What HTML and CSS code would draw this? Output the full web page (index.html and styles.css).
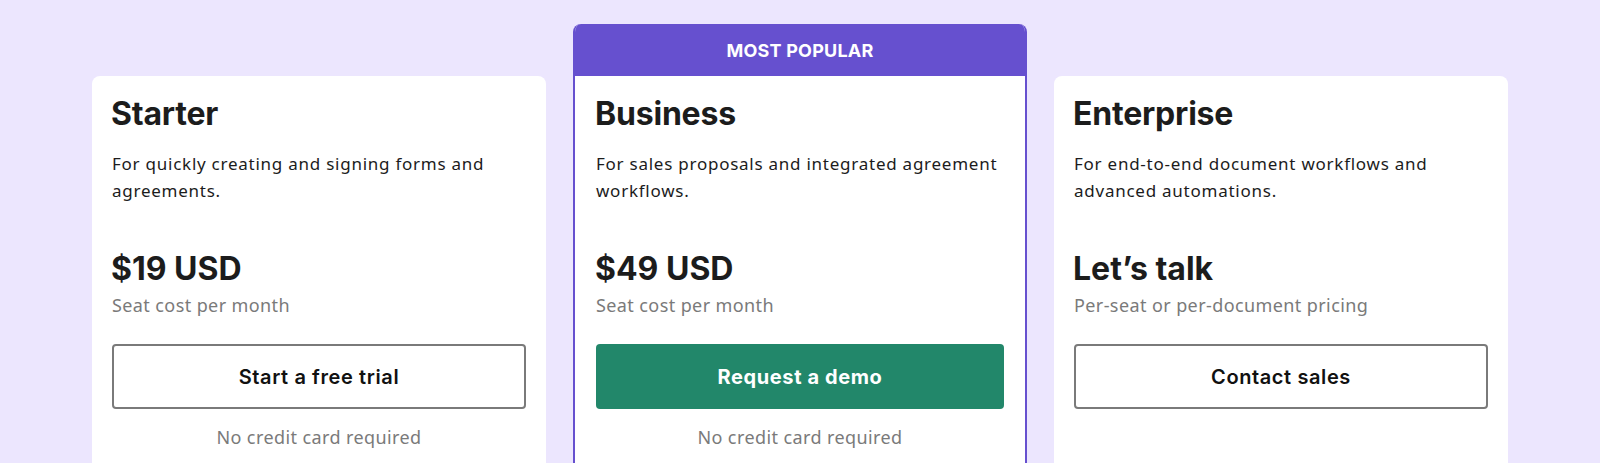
FILE: index.html
```html
<!DOCTYPE html>
<html lang="en">
<head>
<meta charset="utf-8">
<title>Pricing</title>
<link rel="stylesheet" href="styles.css">
</head>
<body>
<main class="plans">
  <section class="card">
    <div class="card-body">
      <h2 class="plan-name">Starter</h2>
      <p class="plan-desc">For quickly creating and signing forms and agreements.</p>
      <div class="price">$19 USD</div>
      <div class="price-sub">Seat cost per month</div>
      <a class="btn btn-outline">Start a free trial</a>
      <p class="note">No credit card required</p>
    </div>
  </section>
  <section class="card popular">
    <div class="badge">MOST POPULAR</div>
    <div class="card-body">
      <h2 class="plan-name">Business</h2>
      <p class="plan-desc">For sales proposals and integrated agreement workflows.</p>
      <div class="price">$49 USD</div>
      <div class="price-sub">Seat cost per month</div>
      <a class="btn btn-primary">Request a demo</a>
      <p class="note">No credit card required</p>
    </div>
  </section>
  <section class="card">
    <div class="card-body">
      <h2 class="plan-name">Enterprise</h2>
      <p class="plan-desc">For end-to-end document workflows and advanced automations.</p>
      <div class="price">Let’s talk</div>
      <div class="price-sub">Per-seat or per-document pricing</div>
      <a class="btn btn-outline">Contact sales</a>
    </div>
  </section>
</main>
</body>
</html>
```
FILE: styles.css
```css
html, body {
  margin: 0;
  padding: 0;
  height: 100%;
  overflow: hidden;
}
body {
  background: #ece6fe;
  font-family: "Noto Sans", "Lato", sans-serif;
  color: #1c1c1c;
}
.plans {
  display: flex;
  justify-content: center;
  align-items: flex-start;
  gap: 27px;
  padding-top: 24px;
}
.card {
  width: 454px;
  box-sizing: border-box;
  background: #fff;
  border-radius: 8px;
  margin-top: 52px;
  min-height: 600px;
}
.card-body {
  padding: 20px 20px 0;
}
.popular {
  margin-top: 0;
  border: 2px solid #6650cf;
  border-top: 0;
  overflow: hidden;
}
.popular .card-body {
  padding: 20px 21px 0;
}
.badge {
  height: 52px;
  background: #6650cf;
  color: #fff;
  display: flex;
  align-items: center;
  justify-content: center;
  font-family: "Inter", sans-serif;
  font-weight: 700;
  font-size: 18px;
  letter-spacing: 0.2px;
  margin: 0 -2px;
}
.plan-name {
  margin: 0 0 0 -1px;
  font-family: "Inter", sans-serif;
  font-weight: 700;
  font-size: 32px;
  line-height: 36px;
  letter-spacing: -0.2px;
  color: #1c1c1c;
}
.plan-desc {
  margin: 18px 0 0;
  font-size: 17px;
  line-height: 27px;
  min-height: 54px;
  letter-spacing: 0.75px;
  color: #1c1c1c;
}
.price {
  margin: 47px 0 0 -1px;
  font-family: "Inter", sans-serif;
  font-weight: 700;
  font-size: 32px;
  line-height: 36px;
  color: #1c1c1c;
}
.price-sub {
  margin-top: 6px;
  font-size: 18px;
  line-height: 24px;
  color: #7a7a7a;
  letter-spacing: 0.4px;
}
.btn {
  margin-top: 27px;
  height: 65px;
  box-sizing: border-box;
  display: flex;
  align-items: center;
  justify-content: center;
  border-radius: 4px;
  font-family: "Inter", sans-serif;
  font-weight: 600;
  font-size: 20px;
  letter-spacing: 0.6px;
  cursor: pointer;
}
.btn-outline {
  border: 2px solid #7a7a7a;
  color: #111;
  background: #fff;
}
.btn-primary {
  background: #22876a;
  color: #fff;
  font-weight: 700;
}
.note {
  margin: 16px 0 0;
  text-align: center;
  font-size: 18px;
  line-height: 24px;
  color: #7a7a7a;
  letter-spacing: 0.4px;
}
```
